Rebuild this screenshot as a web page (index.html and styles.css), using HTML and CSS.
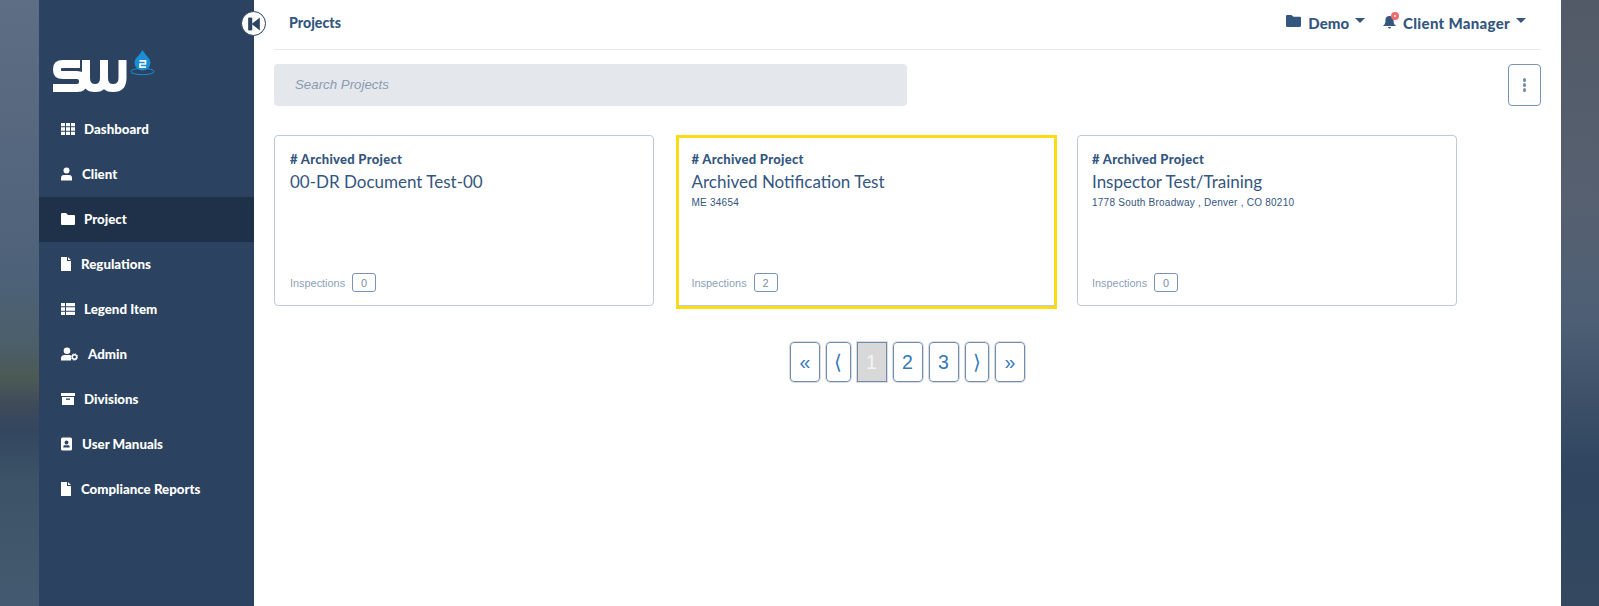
FILE: index.html
```html
<!DOCTYPE html>
<html lang="en">
<head>
<meta charset="utf-8">
<title>Projects</title>
<link rel="stylesheet" href="styles.css">
</head>
<body>
<div class="strip strip-left"></div>
<aside class="sidebar">
  <button class="collapse" aria-label="Collapse">
    <svg viewBox="0 0 12 12" width="14" height="14"><rect x="1" y="0.500" width="3.500" height="11" fill="#2b4360"/><path d="M4 6 11 0.500V11.500Z" fill="#2b4360"/></svg>
  </button>
  <div class="logo">
    <svg viewBox="0 0 110 44" width="110" height="44">
      <g fill="none" stroke="#fff" stroke-width="8">
        <path d="M27 14H10Q4 14 4 19V20Q4 25 10 25H24Q30 25 30 31V32Q30 38 24 38H0"/>
        <path d="M33 10V28Q33 38 42 38Q51 38 51 28V10M51 28Q51 38 60 38Q69.500 38 69.500 28V10"/>
      </g>
      <path d="M89.500 0C85 7 81.500 9 81.500 12.500A8 8 0 0 0 97.500 12.500C97.500 9 94 7 89.500 0Z" fill="#1a8fd6"/>
      <ellipse cx="89.500" cy="21.500" rx="11.500" ry="3.200" fill="none" stroke="#1a8fd6" stroke-width="1"/>
      <path d="M86.500 10.800H92.500V14H87V17.200H93" fill="none" stroke="#fff" stroke-width="1.700"/>
    </svg>
  </div>
  <nav class="nav">
    <a class="nav-item"><svg class="ico" viewBox="0 0 14 12"><path d="M0 0h4v3.300H0zM5 0h4v3.300H5zM10 0h4v3.300h-4zM0 4.300h4v3.400H0zM5 4.300h4v3.400H5zM10 4.300h4v3.400h-4zM0 8.700h4V12H0zM5 8.700h4V12H5zM10 8.700h4V12h-4z"/></svg><span class="lbl lbl-a">Dashboard</span></a>
    <a class="nav-item"><svg class="ico ico-user" viewBox="0 0 11 13"><circle cx="5.500" cy="3" r="3"/><path d="M0 13v-2.500A3 3 0 0 1 3 7.500h5a3 3 0 0 1 3 3V13z"/></svg><span class="lbl lbl-b">Client</span></a>
    <a class="nav-item active"><svg class="ico" viewBox="0 0 14 12"><path d="M1 0h4l2 2h6a1 1 0 0 1 1 1v8a1 1 0 0 1-1 1H1a1 1 0 0 1-1-1V1a1 1 0 0 1 1-1z"/></svg><span class="lbl lbl-a">Project</span></a>
    <a class="nav-item"><svg class="ico ico-file" viewBox="0 0 10 14"><path d="M0 0h6v4h4v10H0zM7 0l3 3H7z"/></svg><span class="lbl lbl-c">Regulations</span></a>
    <a class="nav-item"><svg class="ico" viewBox="0 0 14 12"><path d="M0 0h4v3.300H0zM5 0h9v3.300H5zM0 4.300h4v3.400H0zM5 4.300h9v3.400H5zM0 8.700h4V12H0zM5 8.700h9V12H5z"/></svg><span class="lbl lbl-a">Legend Item</span></a>
    <a class="nav-item"><svg class="ico ico-wide" viewBox="0 0 17 13"><circle cx="6" cy="3.300" r="3.300"/><path d="M0 13v-2a3.500 3.500 0 0 1 3.500-3.500h5A3 3 0 0 1 10 8v5z"/><circle cx="13.500" cy="9.500" r="2.200" fill="none" stroke="#fff" stroke-width="1.500"/><circle cx="13.500" cy="9.500" r="3.200" fill="none" stroke="#fff" stroke-width="1" stroke-dasharray="1.300 1.200"/></svg><span class="lbl lbl-d">Admin</span></a>
    <a class="nav-item"><svg class="ico" viewBox="0 0 14 12"><path d="M0 0h14v3H0zM1 4h12v8H1z"/><rect x="5" y="5.500" width="4" height="1.300" fill="#2b4360"/></svg><span class="lbl lbl-a">Divisions</span></a>
    <a class="nav-item"><svg class="ico ico-book" viewBox="0 0 11 13"><rect width="11" height="13" rx="1.500"/><circle cx="5.500" cy="5" r="1.900" fill="#2b4360"/><path d="M2.300 10V9.200A1.500 1.500 0 0 1 3.800 7.800h3.400a1.500 1.500 0 0 1 1.500 1.400V10z" fill="#2b4360"/></svg><span class="lbl lbl-e">User Manuals</span></a>
    <a class="nav-item"><svg class="ico ico-file" viewBox="0 0 10 14"><path d="M0 0h6v4h4v10H0zM7 0l3 3H7z"/></svg><span class="lbl lbl-c">Compliance Reports</span></a>
  </nav>
</aside>
<main class="main">
  <header class="topbar">
    <h1 class="page-title">Projects</h1>
    <div class="top-actions">
      <div class="top-item top-demo">
        <svg class="top-ico" viewBox="0 0 14 11"><path d="M1 0h4l2 1.500h6a1 1 0 0 1 1 1V10a1 1 0 0 1-1 1H1a1 1 0 0 1-1-1V1a1 1 0 0 1 1-1z"/></svg>
        <span>Demo</span><i class="caret"></i>
      </div>
      <div class="top-item top-client">
        <span class="bell">
          <svg viewBox="0 0 13 14" width="13" height="14"><path d="M6.500 1A4 4 0 0 1 10.500 5C10.500 9 12 10 13 11H0C1 10 2.500 9 2.500 5A4 4 0 0 1 6.500 1ZM5 12H8A1.500 1.500 0 0 1 5 12Z" fill="#34567f"/></svg>
          <span class="badge-dot"></span>
        </span>
        <span>Client Manager</span><i class="caret"></i>
      </div>
    </div>
  </header>
  <div class="tools">
    <input class="search" type="text" placeholder="Search Projects">
    <button class="kebab" aria-label="More"><span></span><span></span><span></span></button>
  </div>
  <section class="cards">
    <article class="card">
      <div class="eyebrow"># Archived Project</div>
      <h2 class="card-title">00-DR Document Test-00</h2>
      <p class="addr"></p>
      <div class="insp"><span>Inspections</span><b class="count">0</b></div>
    </article>
    <article class="card selected">
      <div class="eyebrow"># Archived Project</div>
      <h2 class="card-title">Archived Notification Test</h2>
      <p class="addr">ME 34654</p>
      <div class="insp"><span>Inspections</span><b class="count">2</b></div>
    </article>
    <article class="card card-last">
      <div class="eyebrow"># Archived Project</div>
      <h2 class="card-title">Inspector Test/Training</h2>
      <p class="addr">1778 South Broadway , Denver , CO 80210</p>
      <div class="insp"><span>Inspections</span><b class="count">0</b></div>
    </article>
  </section>
  <nav class="pager">
    <a class="pg pg-w">«</a>
    <a class="pg pg-n">⟨</a>
    <a class="pg pg-w current">1</a>
    <a class="pg pg-w">2</a>
    <a class="pg pg-w">3</a>
    <a class="pg pg-n">⟩</a>
    <a class="pg pg-w">»</a>
  </nav>
</main>
<div class="strip strip-right"></div>
</body>
</html>
```
FILE: styles.css
```css
* { box-sizing: border-box; }
html, body { height: 100%; }
body {
  margin: 0;
  display: flex;
  height: 606px;
  overflow: hidden;
  background: #fff;
  font-family: "Lato", "Liberation Sans", sans-serif;
  color: #34567f;
}
.strip { flex: none; height: 100%; }
.strip-left {
  width: 39px;
  background: linear-gradient(180deg, #5e6e84 0, #55677e 150px, #4d6178 280px, #4b5f6a 345px, #4c5a55 378px, #3f4a5a 405px, #33465f 430px, #3c5367 480px, #435a70 606px);
}
.strip-right {
  width: 38px;
  background: linear-gradient(180deg, #525a67 0, #566070 200px, #4d5f75 320px, #3d5068 400px, #2f4560 470px, #34495f 606px);
}
.sidebar {
  flex: none;
  width: 215px;
  position: relative;
  background: #2b4360;
  color: #fff;
}
.collapse {
  position: absolute;
  top: 11px;
  right: -12px;
  width: 25px;
  height: 25px;
  padding: 0;
  display: flex;
  align-items: center;
  justify-content: center;
  background: #fff;
  border: 1px solid #2b4360;
  border-radius: 50%;
  z-index: 2;
}
.logo { height: 107px; padding: 50px 0 0 14px; }
.logo svg { display: block; }
.nav { display: flex; flex-direction: column; }
.nav-item {
  height: 45px;
  display: flex;
  align-items: center;
  padding: 0 0 2px 22px;
  font-weight: 900;
  font-size: 13.300px;
}
.nav-item.active { background: #1e3148; }
.ico { width: 14px; height: 14px; fill: #fff; flex: none; }
.ico-user { width: 11px; }
.ico-file { width: 10px; }
.ico-wide { width: 17px; }
.ico-book { width: 11px; }
.lbl-a { margin-left: 9px; }
.lbl-b { margin-left: 10px; }
.lbl-c { margin-left: 10px; }
.lbl-d { margin-left: 10px; }
.lbl-e { margin-left: 10px; }
.main { flex: 1; min-width: 0; padding: 0 20px; }
.topbar {
  height: 50px;
  display: flex;
  align-items: center;
  justify-content: space-between;
  padding: 0 15px 4px 15px;
  border-bottom: 1px solid #e6e8eb;
}
.page-title { margin: 0; font-size: 14.200px; font-weight: 900; }
.top-actions { display: flex; align-items: center; gap: 18px; }
.top-item { display: flex; align-items: center; font-weight: 900; font-size: 15px; letter-spacing: 0.300px; }
.top-item > span:not(.bell) { margin-top: 1px; }
.top-demo { letter-spacing: 0; }
.top-ico { width: 15px; height: 12px; fill: #34567f; margin: -3px 7px 0 0; }
.bell { position: relative; margin: -2px 7px 0 0; display: flex; }
.badge-dot {
  position: absolute;
  top: -3px;
  right: -3px;
  width: 8px;
  height: 8px;
  border-radius: 50%;
  background: #fff;
  border: 3px solid #f8686f;
}
.caret {
  width: 0;
  height: 0;
  margin: -4px 0 0 6px;
  border: 5px solid transparent;
  border-top: 5px solid #34567f;
  border-bottom: 0;
}
.tools {
  display: flex;
  justify-content: space-between;
  margin-top: 14px;
}
.search {
  width: 633px;
  height: 42px;
  padding: 0 21px 2px;
  border: 0;
  border-radius: 4px;
  background: #e4e7ec;
  font: italic 13.300px "Liberation Sans", sans-serif;
}
.search::placeholder { color: #8c9bb0; opacity: 1; }
.kebab {
  width: 33px;
  height: 42px;
  padding: 0;
  display: flex;
  flex-direction: column;
  align-items: center;
  justify-content: center;
  gap: 1.500px;
  background: #fff;
  border: 1px solid #7a93b5;
  border-radius: 4px;
}
.kebab span { width: 3.500px; height: 3.500px; border-radius: 50%; background: #7a8ea9; }
.cards {
  display: grid;
  grid-template-columns: repeat(3, 380px);
  column-gap: 21.500px;
  margin-top: 29px;
}
.card {
  height: 171px;
  padding: 14px 15px 0;
  display: flex;
  flex-direction: column;
  background: #fff;
  border: 1px solid #bccada;
  border-radius: 4px;
}
.card-last { padding-left: 14px; }
.card.selected {
  margin-right: -1px;
  padding: 12px 12px 0 13px;
  border: 3px solid #fddc14;
  border-bottom: 1px solid #bccada;
  border-radius: 0;
  box-shadow: 0 3px 0 #fddc14;
}
.eyebrow { font-size: 13px; font-weight: 900; line-height: 18px; letter-spacing: 0.280px; }
.card-title { margin: 1px 0 0; font-size: 17px; font-weight: 400; line-height: 25px; }
.addr { margin: 2px 0 0; min-height: 14px; font: 10px/14px "Liberation Sans", sans-serif; letter-spacing: 0.240px; color: #34567f; }
.insp {
  margin-top: auto;
  margin-bottom: 13px;
  display: flex;
  align-items: center;
  gap: 7px;
  font: 10.900px "Liberation Sans", sans-serif;
  color: #8c9fb9;
}
.count {
  width: 24px;
  height: 19px;
  display: flex;
  align-items: center;
  justify-content: center;
  font-weight: 400;
  font-size: 10.900px;
  color: #7a8ea9;
  border: 1px solid #7a93b5;
  border-radius: 3px;
}
.pager {
  margin-top: 36px;
  display: flex;
  justify-content: center;
  gap: 6px;
}
.pg {
  height: 40px;
  display: flex;
  align-items: center;
  justify-content: center;
  font: 19.500px "Liberation Sans", sans-serif;
  color: #3579b8;
  background: #fff;
  border: 1px solid #6f8db1;
  border-radius: 4px;
  outline: 1px solid #dcdcdc;
}
.pg-w { width: 30px; }
.pg-n { width: 24.500px; }
.pg.current { background: #d8d8d8; color: #f4f4f4; border-radius: 0; }
```
